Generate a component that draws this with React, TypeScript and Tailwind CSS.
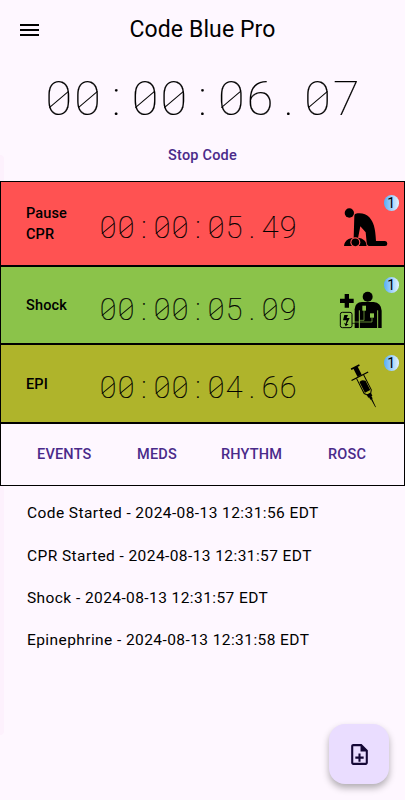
import type { ReactNode } from "react";

type TimerProps = {
  value: string;
  large?: boolean;
};

// Fixed-pitch thin digits, zeros get a slash across the bowl.
function Timer({ value, large }: TimerProps) {
  return (
    <div
      className={
        large
          ? "flex text-[48.500px] leading-[56px] font-thin [-webkit-text-stroke:0.15px_black]"
          : "flex text-[30.500px] leading-[36px] font-thin [-webkit-text-stroke:0.2px_black]"
      }
    >
      {value.split("").map((c, i) => (
        <span
          key={i}
          className={
            large
              ? "relative flex w-[28.75px] justify-center"
              : "relative flex w-[18px] justify-center"
          }
        >
          {c}
          {c === "0" && (
            <span
              className={
                large
                  ? "absolute top-1/2 left-1/2 h-[1.2px] w-[25px] -translate-x-1/2 -rotate-[40deg] bg-black"
                  : "absolute top-1/2 left-1/2 h-px w-[16px] -translate-x-1/2 -rotate-[40deg] bg-black/90"
              }
            />
          )}
        </span>
      ))}
    </div>
  );
}

function CprIcon() {
  return (
    <svg width="75" height="85" viewBox="0 0 225 255">
      <circle cx="58" cy="96" r="14" />
      <path d="M77 98C92 94 108 98 118 109C131 124 136 140 138 180H165Q172 181 172 188T165 195H120Q111 195 110 185L107 154L91 136L84 172H71L73 104Q73 99 77 98Z" />
      <path d="M42 195Q43 181 56 174Q66 170 76 170Q96 169 105 180Q109 185 110 195Z" />
      <circle cx="76" cy="184" r="15" fill="#ff5252" />
      <circle cx="76" cy="184" r="11.5" />
    </svg>
  );
}

function ShockIcon() {
  return (
    <svg width="75" height="80" viewBox="0 0 225 240">
      <path d="M44 84H57V98H71V111H57V125H44V111H30V98H44Z" />
      <circle cx="113" cy="92" r="15" />
      <path d="M74 186V130Q75 109 96 108H131Q153 110 155 134V186Z" />
      <g fill="none" stroke="#8bc34a" strokeWidth="3">
        <path d="M88 133V186M143 133V186" />
        <path d="M102 130V163H88M126 154V168H67" strokeWidth="2" />
      </g>
      <rect x="97" y="119" width="11" height="15" fill="#8bc34a" />
      <rect x="120" y="142" width="12" height="13" fill="#8bc34a" />
      <rect x="31" y="139" width="35" height="46" rx="6" fill="#8bc34a" stroke="#000" strokeWidth="3" />
      <path d="M43 147H54L50 156H59L50 174H56L47 181L42 170L47 173L50 163H39Z" />
      <path d="M66 172H76" stroke="#000" strokeWidth="2" />
    </svg>
  );
}

function SyringeIcon() {
  return (
    <svg width="75" height="80" viewBox="0 0 225 240">
      <g transform="translate(76 70) rotate(-27)">
        <path d="M-14 -3H14V2H-14ZM-7 2H7V28H-7ZM-28 28H28V32H-28Z" />
        <path d="M-12 31V82L-6 90H6L12 82V31" fill="none" stroke="#000" strokeWidth="3" />
        <path d="M-9 45Q0 40 9 50V81H-9ZM-7 89H7V99H-7ZM-4 99H4V107H-4ZM-2 106H2L1 134H-1Z" />
      </g>
    </svg>
  );
}

type RowProps = {
  label: ReactNode;
  time: string;
  icon: ReactNode;
  className: string;
  badgeClass: string;
};

function TimerRow({ label, time, icon, className, badgeClass }: RowProps) {
  return (
    <button className={`relative flex w-full shrink-0 items-center border border-black text-left ${className}`}>
      <span className="w-[72px] pt-px pl-[25px] text-[14.5px] leading-[21px] font-medium tracking-[0.15px]">
        {label}
      </span>
      <div className="ml-[26px] pt-[9px]">
        <Timer value={time} />
      </div>
      <span className="absolute -top-px -right-px">{icon}</span>
      <span
        className={`absolute right-[5px] flex size-[15.500px] items-center justify-center rounded-full bg-linear-to-r from-[#55aef7] to-[#e3f2fd] text-[14px] leading-4 ${badgeClass}`}
      >
        1
      </span>
    </button>
  );
}

const events = [
  "Code Started - 2024-08-13 12:31:56 EDT",
  "CPR Started - 2024-08-13 12:31:57 EDT",
  "Shock - 2024-08-13 12:31:57 EDT",
  "Epinephrine - 2024-08-13 12:31:58 EDT",
];

export default function App() {
  return (
    <main className="relative flex h-[800px] w-[405px] flex-col overflow-hidden bg-[#fef7ff] font-['Roboto',sans-serif] text-black">
      <div className="absolute top-[155px] left-0 h-[580px] w-[4px] rounded-r-md bg-[#fdf1fd]" />

      <header className="relative flex h-[60px] shrink-0 items-center justify-center">
        <button aria-label="Menu" className="absolute top-6 left-5 flex flex-col gap-[3px]">
          <span className="h-[2px] w-[19px] bg-black" />
          <span className="h-[2px] w-[19px] bg-black" />
          <span className="h-[2px] w-[19px] bg-black" />
        </button>
        <h1 className="text-[23px] font-[380] tracking-[0.1px]">Code Blue Pro</h1>
      </header>

      <div className="flex h-[76px] shrink-0 items-center justify-center pt-px">
        <Timer value="00:00:06.07" large />
      </div>

      <div className="flex h-[45px] shrink-0 justify-center pt-[10px]">
        <button className="h-5 text-[14.5px] leading-5 font-medium tracking-[0.2px] text-[#4a2a8a]">Stop Code</button>
      </div>

      <section className="relative flex shrink-0 flex-col">
        <TimerRow
          label={<>Pause<br />CPR</>}
          time="00:00:05.49"
          icon={<CprIcon />}
          className="h-[85px] bg-[#ff5252]"
          badgeClass="top-[13px]"
        />
        <TimerRow
          label="Shock"
          time="00:00:05.09"
          icon={<ShockIcon />}
          className="h-[78px] bg-[#8bc34a]"
          badgeClass="top-[10px]"
        />
        <TimerRow
          label="EPI"
          time="00:00:04.66"
          icon={<SyringeIcon />}
          className="h-[79px] bg-[#afb42b]"
          badgeClass="top-[10px]"
        />
        <nav className="flex h-[63px] items-center border border-black bg-[#fef7ff] pl-9 text-[14.5px] font-[460] tracking-[0.2px] text-[#4a2a8a]">
          <button className="w-[100px] text-left">EVENTS</button>
          <button className="w-[84px] text-left">MEDS</button>
          <button className="w-[107px] text-left">RHYTHM</button>
          <button>ROSC</button>
        </nav>
      </section>

      <ul className="relative flex flex-col pt-[7px] pl-[27px] text-[15.5px] tracking-[0.42px]">
        {events.map((e) => (
          <li key={e} className="flex h-[42.2px] items-center">
            {e}
          </li>
        ))}
      </ul>

      <button
        aria-label="Add note"
        className="absolute top-[724px] left-[329px] flex size-[60px] items-center justify-center rounded-[16px] bg-[#eaddff] shadow-[0_4px_7px_rgba(0,0,0,0.3)]"
      >
        <svg width="25" height="25" viewBox="0 0 24 24" fill="#150836">
          <path d="M14 2H6C4.900 2 4 2.900 4 4V20C4 21.100 4.900 22 6 22H18C19.100 22 20 21.100 20 20V8L14 2ZM6 20V4H13V9H18V20H6ZM11 11H13V14H16V16H13V19H11V16H8V14H11Z" />
        </svg>
      </button>
    </main>
  );
}
